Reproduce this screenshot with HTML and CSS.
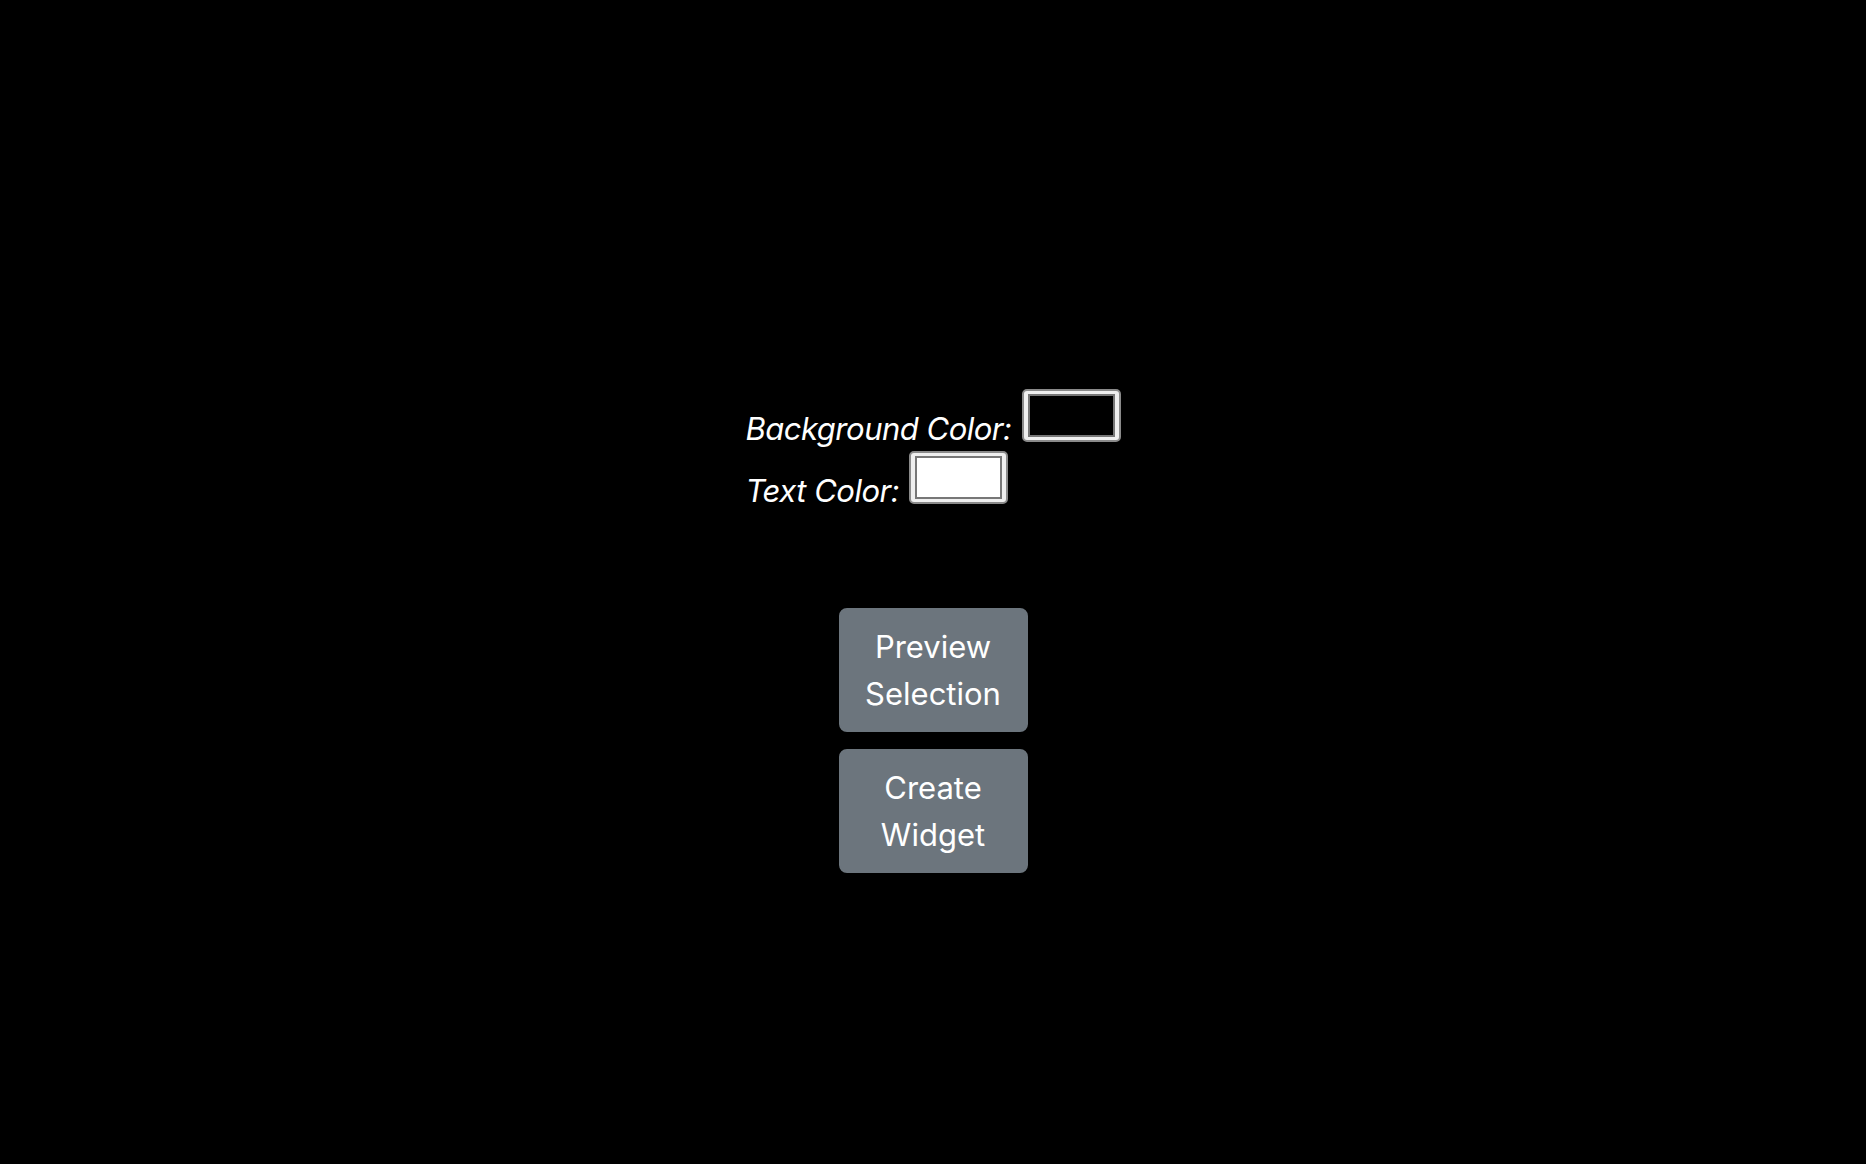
FILE: index.html
```html
<!DOCTYPE html>
<html lang="en">
<head>
    <meta charset="UTF-8">
    <meta name="viewport" content="width=device-width, initial-scale=1.0">
    <title>Widget Builder</title>
    <link rel="stylesheet" href="styles.css">
</head>
<body>
    <div class="page">
        <div class="options">
            <div class="option-row">
                <label for="bgColor">Background Color:</label>
                <input type="color" id="bgColor" value="#000000">
            </div>
            <div class="option-row">
                <label for="textColor">Text Color:</label>
                <input type="color" id="textColor" value="#ffffff">
            </div>
        </div>

        <div class="actions">
            <button class="btn">Preview Selection</button>
            <button class="btn">Create Widget</button>
        </div>
    </div>
</body>
</html>
```

FILE: styles.css
```css
body {
    margin: 0;
    background-color: #000000;
    color: #ffffff;
    font-family: Inter, "Noto Sans", sans-serif;
    height: 100vh;
}
.page {
    display: flex;
    flex-direction: column;
    align-items: center;
    padding-top: 389px;
}
.options {
    display: flex;
    flex-direction: column;
    gap: 9px;
}
.option-row {
    display: flex;
    align-items: flex-end;
    gap: 10px;
}
.option-row label {
    font-size: 31px;
    font-style: italic;
    letter-spacing: -0.5px;
    line-height: 1;
    margin-bottom: -2px;
}
input[type="color"] {
    width: 99px;
    height: 53px;
    padding: 3px 4px;
    margin: 0;
    border: 2px solid #8a8a8a;
    border-radius: 5px;
    background-color: #efefef;
    box-sizing: border-box;
}
input[type="color"]::-webkit-color-swatch-wrapper {
    padding: 0;
}
input[type="color"]::-webkit-color-swatch {
    border: 2px solid #777777;
    border-radius: 0;
}
.actions {
    display: flex;
    flex-direction: column;
    gap: 17px;
    margin-top: 104px;
}
.btn {
    width: 189px;
    padding: 13px 20px;
    font-family: Inter, "Noto Sans", sans-serif;
    font-size: 31px;
    line-height: 47px;
    color: #ffffff;
    background-color: #6c757d;
    border: 2px solid #6c757d;
    border-radius: 8px;
    cursor: pointer;
}
.btn:hover {
    background-color: #5c636a;
}
```
